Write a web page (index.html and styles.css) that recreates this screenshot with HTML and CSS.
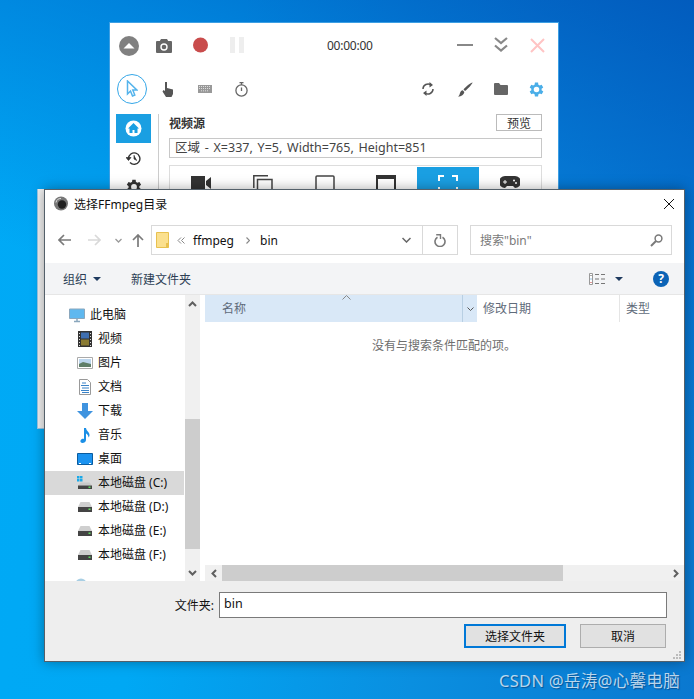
FILE: index.html
```html
<!DOCTYPE html>
<html lang="zh">
<head>
<meta charset="utf-8">
<title>选择FFmpeg目录</title>
<link rel="stylesheet" href="styles.css">
</head>
<body>
<div class="desktop">
  <div class="back-strip"></div>

  <section class="recorder">
    <div class="rec-row rec-top">
      <svg class="i-eject" width="20" height="20" viewBox="0 0 20 20"><circle cx="10" cy="10" r="10" fill="#808080"/><path d="M4.5 12.5 10 7l5.500 5.500z" fill="#fff"/></svg>
      <svg class="i-cam" width="16" height="14" viewBox="0 0 16 14"><path d="M5 0h6l1.200 2H15a1 1 0 0 1 1 1v10a1 1 0 0 1-1 1H1a1 1 0 0 1-1-1V3a1 1 0 0 1 1-1h2.800z" fill="#666"/><circle cx="8" cy="8" r="3.700" fill="#fff"/><circle cx="8" cy="8" r="2.300" fill="#666"/></svg>
      <svg class="i-rec" width="15" height="16" viewBox="0 0 15 16"><circle cx="7.500" cy="8" r="7.500" fill="#c94c4c"/></svg>
      <svg class="i-pause" width="14" height="16" viewBox="0 0 14 16"><path d="M0 0h5v16H0zM9 0h5v16H9z" fill="#eee"/></svg>
      <span class="time">00:00:00</span>
      <svg class="i-min" width="16" height="2" viewBox="0 0 16 2"><path d="M0 0h16v2H0z" fill="#888"/></svg>
      <svg class="i-dbl" width="14" height="16" viewBox="0 0 14 16"><path d="M1 1l6 5 6-5M1 8.500l6 5 6-5" fill="none" stroke="#888" stroke-width="2.200"/></svg>
      <svg class="i-x" width="15" height="15" viewBox="0 0 15 15"><path d="M1 1l13 13M14 1L1 14" stroke="#ffc4c4" stroke-width="2"/></svg>
    </div>
    <div class="rec-row rec-tools">
      <span class="cursor-ring"><svg width="12" height="18" viewBox="0 0 12 18"><path d="M1.500 1v13l3-3 2 5 2.300-1-2-5h4z" fill="#fff" stroke="#55b4ec" stroke-width="1.500"/></svg></span>
      <svg class="i-hand" width="12" height="15" viewBox="0 0 12 15"><path d="M3 0.500a1 1 0 0 1 2 0V6l6 1.500V12l-1.500 3H4L0.500 9.500 1.500 8 3 9z" fill="#555"/></svg>
      <svg class="i-kbd" width="14" height="8" viewBox="0 0 14 8"><path d="M0 0h14v8H0z" fill="#999"/><path d="M1 1.500h12M1 3.500h12M3 5.800h8" stroke="#ddd" stroke-dasharray="1 1"/></svg>
      <svg class="i-timer" width="13" height="15" viewBox="0 0 13 15"><circle cx="6.500" cy="8.500" r="5.600" fill="none" stroke="#666" stroke-width="1.300"/><path d="M4.500.7h4M6.500 1v2M6.500 5.500v3.500" stroke="#666" stroke-width="1.300" fill="none"/></svg>
      <svg class="i-sync" width="12" height="14" viewBox="0 0 12 14"><path d="M1 7a5 5 0 0 1 8-4M11 7a5 5 0 0 1-8 4" fill="none" stroke="#555" stroke-width="1.500"/><path d="M7.500 0v5.500L11 3zM4.500 14V8.500L1 11z" fill="#555"/></svg>
      <svg class="i-brush" width="15" height="15" viewBox="0 0 15 15"><path d="M14.500.5c.5.500-5 7-7.500 8.500L5.500 7.500C7 5 14 0 14.500.5z" fill="#555"/><path d="M4.800 8.300 6.300 10C6 12.500 3.500 14.500 0 14.500c1.500-1 1.500-2 2-3.500.5-1.500 1.500-2.500 2.800-2.700z" fill="#555"/></svg>
      <svg class="i-fold" width="14" height="12" viewBox="0 0 14 12"><path d="M0 1a1 1 0 0 1 1-1h4l1.500 2H13a1 1 0 0 1 1 1v8a1 1 0 0 1-1 1H1a1 1 0 0 1-1-1z" fill="#666"/></svg>
      <svg class="i-gear" width="19" height="19" viewBox="0 0 24 24"><path d="M19.400 13a7.500 7.500 0 0 0 0-2l2.100-1.600-2-3.500-2.500 1a7.500 7.500 0 0 0-1.700-1L15 3.200h-4l-.4 2.700a7.500 7.500 0 0 0-1.700 1l-2.500-1-2 3.500L6.500 11a7.500 7.500 0 0 0 0 2l-2.100 1.600 2 3.500 2.500-1a7.500 7.500 0 0 0 1.700 1l.4 2.700h4l.4-2.700a7.500 7.500 0 0 0 1.700-1l2.500 1 2-3.500zM13 15.500a3.500 3.500 0 1 1 0-7 3.500 3.500 0 0 1 0 7z" transform="translate(-1 0)" fill="#4aaee8"/></svg>
    </div>
    <div class="rec-body">
      <div class="rec-side">
        <span class="side-home"><svg width="17" height="17" viewBox="0 0 17 17"><circle cx="8.500" cy="8.500" r="8" fill="#fff"/><path d="M8.500 3 3 8.500h1.500V13h3V10h2v3h3V8.500H14z" fill="#1a9fe2"/></svg></span>
        <svg class="side-hist" width="15" height="15" viewBox="0 0 15 15"><path d="M2.500 7.500A5.700 5.700 0 1 1 4 11.500" fill="none" stroke="#333" stroke-width="1.400"/><path d="M0 6.500h5L2.500 9.500zM8 4v4l3 1.500" fill="#333" stroke="#333" stroke-width=".7"/></svg>
        <svg class="side-gear" width="20" height="20" viewBox="0 0 24 24"><path d="M19.400 13a7.500 7.500 0 0 0 0-2l2.100-1.600-2-3.500-2.500 1a7.500 7.500 0 0 0-1.700-1L15 3.200h-4l-.4 2.700a7.500 7.500 0 0 0-1.700 1l-2.500-1-2 3.500L6.500 11a7.500 7.500 0 0 0 0 2l-2.100 1.600 2 3.500 2.500-1a7.500 7.500 0 0 0 1.700 1l.4 2.700h4l.4-2.700a7.500 7.500 0 0 0 1.700-1l2.500 1 2-3.500zM13 15.500a3.500 3.500 0 1 1 0-7 3.500 3.500 0 0 1 0 7z" transform="translate(-1 0)" fill="#333"/></svg>
      </div>
      <div class="rec-main">
        <div class="src-head"><b class="src-title">视频源</b><span class="preview">预览</span></div>
        <div class="src-input">区域 - X=337, Y=5, Width=765, Height=851</div>
        <div class="tiles">
          <span class="tile"><svg width="20" height="16" viewBox="0 0 20 16"><path d="M0 1h14v14H0zM15 6l5-4v12l-5-4z" fill="#333"/></svg></span>
          <span class="tile"><svg width="20" height="18" viewBox="0 0 20 18"><path d="M.8 13V.8H15M4.500 16V4.500H19V16z" fill="none" stroke="#444" stroke-width="1.500"/></svg></span>
          <span class="tile"><svg width="20" height="18" viewBox="0 0 20 18"><rect x="1" y="1" width="18" height="15" rx="1" fill="none" stroke="#444" stroke-width="1.500"/></svg></span>
          <span class="tile"><svg width="20" height="18" viewBox="0 0 20 18"><path d="M0 0h20v4H0z" fill="#333"/><path d="M1 3v15M19 3v15" stroke="#333" stroke-width="2"/></svg></span>
          <span class="tile tile-on"><svg width="20" height="18" viewBox="0 0 20 18"><path d="M1 6V1h5M14 1h5v5M1 12v5h5M14 17h5v-5" fill="none" stroke="#fff" stroke-width="2"/></svg></span>
          <span class="tile"><svg width="20" height="14" viewBox="0 0 20 14"><path d="M5 1h10a5 5 0 0 1 0 12l-2-2H7l-2 2A5 5 0 0 1 5 1z" fill="#333"/><path d="M3 7h4M5 5v4" stroke="#fff"/><circle cx="14" cy="5.500" r="1" fill="#fff"/><circle cx="16" cy="8" r="1" fill="#fff"/></svg></span>
        </div>
      </div>
    </div>
  </section>

  <section class="dialog">
    <header class="dlg-title">
      <svg class="app-logo" width="14" height="15" viewBox="0 0 14 15"><circle cx="7" cy="7.500" r="7" fill="#777"/><circle cx="8" cy="8.500" r="4.200" fill="#222"/><path d="M2 6.500a5 5 0 0 1 5-4" stroke="#ddd" fill="none"/></svg>
      <span class="dlg-name">选择FFmpeg目录</span>
      <svg class="dlg-close" width="10" height="10" viewBox="0 0 10 10"><path d="M0 0l10 10M10 0L0 10" stroke="#111" stroke-width="1"/></svg>
    </header>

    <div class="dlg-nav">
      <svg class="n-back" width="13" height="12" viewBox="0 0 13 12"><path d="M6 1 1 6l5 5M1 6h12" fill="none" stroke="#7a7a7a" stroke-width="1.700"/></svg>
      <svg class="n-fwd" width="13" height="12" viewBox="0 0 13 12"><path d="M7 1l5 5-5 5M12 6H0" fill="none" stroke="#d9d9d9" stroke-width="1.700"/></svg>
      <svg class="n-down" width="7" height="5" viewBox="0 0 7 5"><path d="M.5 1l3 3 3-3" fill="none" stroke="#9a9a9a" stroke-width="1.300"/></svg>
      <svg class="n-up" width="12" height="13" viewBox="0 0 12 13"><path d="M1 6l5-5 5 5M6 1v12" fill="none" stroke="#7a7a7a" stroke-width="1.700"/></svg>
      <div class="addr">
        <svg class="addr-folder" width="13" height="16" viewBox="0 0 13 16"><path d="M.5.500h12v15H.5z" fill="#fbe08e" stroke="#e8c14f"/><path d="M10 11v4.500h2.500V11z" fill="#e8c14f"/></svg>
        <svg class="addr-more" width="8" height="7" viewBox="0 0 8 7"><path d="M4 .5 1 3.500l3 3M7.500.5l-3 3 3 3" fill="none" stroke="#888"/></svg>
        <span class="crumb-a">ffmpeg</span>
        <svg class="addr-sep" width="4" height="7" viewBox="0 0 4 7"><path d="M.5.500l3 3-3 3" fill="none" stroke="#888" stroke-width="1.200"/></svg>
        <span class="crumb-b">bin</span>
        <svg class="addr-drop" width="9" height="6" viewBox="0 0 9 6"><path d="M.5 1l4 4 4-4" fill="none" stroke="#666" stroke-width="1.500"/></svg>
        <span class="addr-refresh"><svg width="12" height="13" viewBox="0 0 12 13"><path d="M3.500 3.200a5 5 0 1 0 5 0" fill="none" stroke="#7a7a7a" stroke-width="1.600"/><path d="M2.200.8h4.300v4.300" fill="none" stroke="#7a7a7a" stroke-width="1.400"/></svg></span>
      </div>
      <div class="search">
        <span class="search-text">搜索"bin"</span>
        <svg width="13" height="13" viewBox="0 0 13 13"><circle cx="8.500" cy="4.500" r="3.400" fill="none" stroke="#7a7a7a" stroke-width="1.500"/><path d="M6 7 1 12" stroke="#7a7a7a" stroke-width="2"/></svg>
      </div>
    </div>

    <div class="dlg-tools">
      <span class="tool-org">组织</span>
      <svg class="caret" width="8" height="4" viewBox="0 0 8 4"><path d="M0 0h8L4 4z" fill="#1f3a5f"/></svg>
      <span class="tool-new">新建文件夹</span>
      <svg class="views" width="17" height="12" viewBox="0 0 17 12"><path d="M.5.500h3v11h-3z" fill="#fff" stroke="#999"/><path d="M6 1.500h4M12 1.500h4M6 6h4M12 6h4M6 10.500h4M12 10.500h4" stroke="#777"/><path d="M1.500 2h1v1h-1z" fill="#555"/><path d="M1.500 5.500h1v1h-1z" fill="#38c"/><path d="M1.500 9h1v1h-1z" fill="#c33"/></svg>
      <svg class="caret caret-views" width="8" height="4" viewBox="0 0 8 4"><path d="M0 0h8L4 4z" fill="#1f3a5f"/></svg>
      <span class="help">?</span>
    </div>

    <div class="dlg-main">
      <nav class="tree">
        <div class="tree-row tree-top">
          <svg width="16" height="15" viewBox="0 0 16 15"><path d="M.5 1h15v9.500H.5z" fill="#5fb8ef" stroke="#8aa7bd"/><path d="M5 13.500h6M8 11v2" stroke="#8aa7bd" stroke-width="1.500"/></svg>
          <span>此电脑</span>
        </div>
        <div class="tree-row">
          <svg width="16" height="16" viewBox="0 0 16 16"><path d="M1 0h14v16H1z" fill="#333"/><path d="M4 1.500h8v6H4z" fill="#3f6fb0"/><path d="M4 8.500h8v6H4z" fill="#8a7b33"/><path d="M2 2h1v1H2zM2 5h1v1H2zM2 8h1v1H2zM2 11h1v1H2zM2 14h1v1H2zM13 2h1v1h-1zM13 5h1v1h-1zM13 8h1v1h-1zM13 11h1v1h-1zM13 14h1v1h-1z" fill="#ddd"/></svg>
          <span>视频</span>
        </div>
        <div class="tree-row">
          <svg width="16" height="12" viewBox="0 0 16 12"><path d="M.5.500h15v11H.5z" fill="#fff" stroke="#aaa"/><path d="M2 2h12v8H2z" fill="#bcd6ee"/><path d="M2 7l4-2 8 2v3H2z" fill="#5f7e68"/></svg>
          <span>图片</span>
        </div>
        <div class="tree-row">
          <svg width="16" height="16" viewBox="0 0 16 16"><path d="M2.500.5h8l3 3v12h-11z" fill="#fff" stroke="#999"/><path d="M5 4h4M4 6.500h8M5 9h7M4 11.500h8M5 13.500h7" stroke="#3a83c8"/></svg>
          <span>文档</span>
        </div>
        <div class="tree-row">
          <svg width="16" height="16" viewBox="0 0 16 16"><path d="M5 0h6v8h5l-8 8-8-8h5z" fill="#3f93df"/></svg>
          <span>下载</span>
        </div>
        <div class="tree-row">
          <svg width="16" height="16" viewBox="0 0 16 16"><path d="M7 1h2c.3 3 3.500 4 3.500 7 0 1-.4 2-1 2.500.2-2-1.500-3.500-2.500-4V13c0 2-2 3-3.500 3S3 15 3.500 13.500 6 11.500 7 12z" fill="#1b8fe6"/></svg>
          <span>音乐</span>
        </div>
        <div class="tree-row">
          <svg width="16" height="12" viewBox="0 0 16 12"><path d="M.5.500h15v11H.5z" fill="#1b93f0" stroke="#0b5c9e"/><path d="M2 10.500h2M12 10.500h2" stroke="#fff"/></svg>
          <span>桌面</span>
        </div>
        <div class="tree-row tree-sel">
          <svg width="16" height="14" viewBox="0 0 16 14"><path d="M0 0h2.500v2.500H0zM3 0h2.500v2.500H3zM0 3h2.500v2.500H0zM3 3h2.500v2.500H3z" fill="#1ba9e8"/><path d="M3.500 6.500h9l2.500 3H1z" fill="#c9c9c9"/><path d="M1 9.500h14V13H1z" fill="#444"/><path d="M11.500 10.500h2v1.500h-2z" fill="#5fdc5f"/></svg>
          <span>本地磁盘 (C:)</span>
        </div>
        <div class="tree-row">
          <svg width="16" height="12" viewBox="0 0 16 12"><path d="M3.500 1h9l2.500 5H1z" fill="#cfcfcf"/><path d="M1 6h14v5H1z" fill="#444"/><path d="M11.500 7.500h2V9h-2z" fill="#5fdc5f"/></svg>
          <span>本地磁盘 (D:)</span>
        </div>
        <div class="tree-row">
          <svg width="16" height="12" viewBox="0 0 16 12"><path d="M3.500 1h9l2.500 5H1z" fill="#cfcfcf"/><path d="M1 6h14v5H1z" fill="#444"/><path d="M11.500 7.500h2V9h-2z" fill="#5fdc5f"/></svg>
          <span>本地磁盘 (E:)</span>
        </div>
        <div class="tree-row">
          <svg width="16" height="12" viewBox="0 0 16 12"><path d="M3.500 1h9l2.500 5H1z" fill="#cfcfcf"/><path d="M1 6h14v5H1z" fill="#444"/><path d="M11.500 7.500h2V9h-2z" fill="#5fdc5f"/></svg>
          <span>本地磁盘 (F:)</span>
        </div>
        <div class="tree-row tree-peek">
          <svg width="12" height="12" viewBox="0 0 12 12"><circle cx="6" cy="6" r="5.500" fill="#a9cfe4"/></svg>
        </div>
      </nav>
      <div class="vscroll">
        <span class="sb-btn"><svg width="9" height="6" viewBox="0 0 9 6"><path d="M1 5l3.500-3.500L8 5" fill="none" stroke="#5f5f5f" stroke-width="2"/></svg></span>
        <span class="vs-gap-a"></span>
        <span class="vs-thumb"></span>
        <span class="vs-gap-b"></span>
        <span class="sb-btn"><svg width="9" height="6" viewBox="0 0 9 6"><path d="M1 1l3.500 3.500L8 1" fill="none" stroke="#5f5f5f" stroke-width="2"/></svg></span>
      </div>
      <div class="files">
        <div class="cols">
          <div class="col-name">
            <span class="col-text">名称</span>
            <svg class="sort" width="9" height="5" viewBox="0 0 9 5"><path d="M.5 4.500l4-4 4 4" fill="none" stroke="#888"/></svg>
            <span class="col-drop"><svg width="7" height="4" viewBox="0 0 7 4"><path d="M.5.500l3 3 3-3" fill="none" stroke="#555"/></svg></span>
          </div>
          <div class="col-date"><span class="col-text">修改日期</span></div>
          <div class="col-type"><span class="col-text">类型</span></div>
        </div>
        <div class="empty">没有与搜索条件匹配的项。</div>
        <div class="hscroll">
          <span class="sb-btn hs-btn"><svg width="6" height="9" viewBox="0 0 6 9"><path d="M5 1 1.500 4.500 5 8" fill="none" stroke="#5f5f5f" stroke-width="2"/></svg></span>
          <span class="hs-thumb"></span>
          <span class="hs-gap"></span>
          <span class="sb-btn hs-btn"><svg width="6" height="9" viewBox="0 0 6 9"><path d="M1 1l3.500 3.500L1 8" fill="none" stroke="#5f5f5f" stroke-width="2"/></svg></span>
        </div>
      </div>
    </div>

    <footer class="dlg-foot">
      <div class="foot-row">
        <label class="foot-label">文件夹:</label>
        <div class="foot-input">bin</div>
      </div>
      <div class="foot-btns">
        <span class="btn btn-primary">选择文件夹</span>
        <span class="btn">取消</span>
      </div>
      <svg class="grip" width="9" height="9" viewBox="0 0 9 9"><path d="M6 0h2v2H6zM3 3h2v2H3zM6 3h2v2H6zM0 6h2v2H0zM3 6h2v2H3zM6 6h2v2H6z" fill="#bbb"/></svg>
    </footer>
  </section>

  <div class="watermark">CSDN @岳涛@心馨电脑</div>
</div>
</body>
</html>
```

FILE: styles.css
```css
* { box-sizing: border-box; }
html, body { margin: 0; padding: 0; }
body {
  font-family: "Noto Sans", "Noto Sans CJK SC", sans-serif;
  font-size: 12px;
  color: #111;
}
svg { display: block; flex: none; }

.desktop {
  position: relative;
  width: 694px;
  height: 699px;
  overflow: hidden;
  background:
    linear-gradient(200deg, rgba(0, 85, 185, .85) 0%, rgba(0, 100, 200, .55) 22%, rgba(0, 110, 205, 0) 52%),
    linear-gradient(100deg, #00aaf6 0%, #00a8f4 30%, #0a8fe0 65%, #0a78d0 100%);
}

/* windows on the desktop */
.back-strip {
  position: absolute;
  left: 37px;
  top: 189px;
  width: 8px;
  height: 240px;
  background: #f0f0f0;
  border-left: 1px solid #9cc6e4;
  border-bottom: 1px solid #9cc6e4;
}
.recorder {
  position: absolute;
  left: 109px;
  top: 22px;
  width: 450px;
  height: 178px;
  background: #fff;
  border: 1px solid #3d9fe3;
  color: #333;
}
.dialog {
  position: absolute;
  left: 44px;
  top: 189px;
  width: 641px;
  height: 473px;
  display: flex;
  flex-direction: column;
  background: #fff;
  border: 1px solid #54606a;
  box-shadow: 0 0 12px rgba(0, 0, 0, .35);
}
.watermark {
  position: absolute;
  left: 499px;
  top: 670px;
  font-size: 16.500px;
  letter-spacing: .3px;
  line-height: 22px;
  color: rgba(255, 255, 255, .72);
  text-shadow: 1px 1px 1px rgba(0, 40, 90, .5);
  white-space: nowrap;
}

/* recorder */
.rec-row { display: flex; align-items: center; }
.rec-top { height: 44px; padding-left: 9px; margin-top: 1px; }
.i-cam { margin-left: 17px; margin-bottom: 1px; }
.i-rec { margin-left: 21px; margin-bottom: 2px; }
.i-pause { margin-left: 22px; margin-bottom: 2px; }
.time { margin-left: 83px; width: 50px; padding-bottom: 2px; font-size: 12px; letter-spacing: -.25px; color: #333; white-space: nowrap; }
.i-min { margin-left: 80px; margin-bottom: 2px; }
.i-dbl { margin-left: 21px; margin-bottom: 2px; }
.i-x { margin-left: 22px; margin-bottom: 2px; }

.rec-tools { height: 30px; padding-left: 7px; margin-top: 6px; }
.cursor-ring {
  width: 30px; height: 30px; border: 1px solid #35a7e8; border-radius: 50%;
  display: flex; align-items: center; justify-content: center;
}
.i-hand { margin-left: 15px; }
.i-kbd { margin-left: 24px; }
.i-timer { margin-left: 23px; }
.i-sync { margin-left: 174px; }
.i-brush { margin-left: 24px; }
.i-fold { margin-left: 21px; }
.i-gear { margin-left: 19px; }

.rec-body { display: flex; margin-top: 10px; padding-left: 6px; }
.rec-side {
  width: 43px; height: 90px; padding-right: 7px;
  border-right: 1px solid #ccc;
  display: flex; flex-direction: column; align-items: center;
}
.side-home {
  width: 35px; height: 29px; background: #1a9fe2; flex: none;
  display: flex; align-items: center; justify-content: center;
}
.side-hist { margin-top: 8px; }
.side-gear { margin-top: 11px; }
.rec-main { width: 373px; margin-left: 10px; }
.src-head { display: flex; justify-content: space-between; height: 17px; align-items: center; }
.src-title { font-weight: 700; font-size: 12px; color: #333; }
.preview {
  width: 46px; height: 17px; border: 1px solid #bbb;
  display: flex; align-items: center; justify-content: center; color: #333;
}
.src-input {
  margin-top: 7px; height: 20px; border: 1px solid #c8c8c8; padding-left: 5px;
  line-height: 18px; font-size: 12.500px; word-spacing: 1.500px; color: #444; white-space: nowrap;
}
.tiles {
  margin-top: 7px; height: 40px; border: 1px solid #ddd; padding: 1px 0 0 0;
  display: flex;
}
.tile { width: 62px; height: 40px; padding-top: 8px; display: flex; justify-content: center; align-items: flex-start; }
.tile-on { background: #1a9fe2; }

/* dialog */
.dlg-title { height: 27px; display: flex; align-items: center; padding-left: 9px; flex: none; }
.dlg-name { margin-left: 6px; font-size: 12px; color: #111; white-space: nowrap; }
.dlg-close { margin-left: auto; margin-right: 10px; }

.dlg-nav { height: 46px; flex: none; display: flex; align-items: center; padding-left: 13px; }
.n-fwd { margin-left: 17px; }
.n-down { margin-left: 14px; }
.n-up { margin-left: 10px; }
.addr {
  margin-left: 7px; width: 307px; height: 30px; border: 1px solid #d9d9d9;
  display: flex; align-items: center; padding-left: 4px;
}
.addr-more { margin-left: 8px; }
.crumb-a { margin-left: 8px; }
.addr-sep { margin-left: 12px; }
.crumb-b { margin-left: 10px; }
.addr-drop { margin-left: auto; margin-right: 11px; }
.addr-refresh {
  width: 35px; height: 28px; border-left: 1px solid #d9d9d9;
  display: flex; align-items: center; justify-content: center;
}
.search {
  margin-left: 12px; width: 202px; height: 30px; border: 1px solid #d9d9d9;
  display: flex; align-items: center; justify-content: space-between;
  padding: 0 8px 0 9px; color: #7a7a7a;
}

.dlg-tools {
  height: 32px; flex: none; background: #f3f4f6; border-bottom: 1px solid #e6e6e6;
  display: flex; align-items: center; padding-left: 18px; color: #2c3e55;
}
.tool-org { width: 24px; white-space: nowrap; }
.caret { margin-left: 6px; }
.tool-new { margin-left: 30px; white-space: nowrap; }
.views { margin-left: auto; }
.caret-views { margin-left: 9px; margin-right: 30px; }
.help {
  width: 16px; height: 16px; border-radius: 50%; margin-right: 15px;
  background: #0b63b6; color: #fff; font-weight: 700; font-size: 12px; line-height: 16px;
  text-align: center; flex: none;
}

.dlg-main { flex: 1; min-height: 0; display: flex; background: #fff; }
.tree { width: 140px; flex: none; padding-top: 8px; overflow: hidden; }
.tree-row {
  height: 24px; display: flex; align-items: center; gap: 5px; padding-left: 32px;
  white-space: nowrap; color: #111;
}
.tree-row span { padding-bottom: 2px; }
.tree-top { padding-left: 24px; }
.tree-sel { background: #d9d9d9; width: 139px; }
.tree-peek { padding-left: 30px; align-items: flex-start; }
.tree-peek svg { margin-top: 11px; }

.vscroll { width: 15px; flex: none; background: #f0f0f0; display: flex; flex-direction: column; }
.sb-btn { height: 17px; flex: none; display: flex; align-items: center; justify-content: center; }
.vs-gap-a { height: 107px; flex: none; }
.vs-thumb { height: 130px; flex: none; background: #cdcdcd; }
.vs-gap-b { flex: 1; }

.files { margin-left: 5px; flex: 1; min-width: 0; display: flex; flex-direction: column; }
.cols { height: 27px; flex: none; display: flex; color: #5f6b7a; }
.col-text { padding-bottom: 2px; }
.col-name {
  position: relative;
  width: 272px; background: #d9e8f7; padding-left: 17px; display: flex; align-items: center;
}
.sort { position: absolute; left: 137px; top: 0; }
.col-drop {
  margin-left: auto; width: 15px; height: 100%; border-left: 1px solid #b8cfe3;
  display: flex; align-items: center; justify-content: center;
}
.col-date { width: 143px; padding-left: 6px; display: flex; align-items: center; border-right: 1px solid #e5e5e5; }
.col-type { padding-left: 6px; display: flex; align-items: center; }
.empty { flex: 1; padding: 14px 0 0 167px; color: #6d6d6d; }
.hscroll { height: 16px; flex: none; background: #f0f0f0; display: flex; }
.hs-btn { width: 17px; height: 16px; }
.hs-thumb { width: 341px; background: #cdcdcd; }
.hs-gap { flex: 1; }

.dlg-foot {
  position: relative;
  height: 80px; flex: none; background: #eee; padding: 11px 17px 0 0;
}
.foot-row { display: flex; justify-content: flex-end; align-items: center; }
.foot-label { margin-right: 5px; white-space: nowrap; }
.foot-input {
  width: 448px; height: 26px; background: #fff; border: 1px solid #7a7a7a;
  padding-left: 4px; font-size: 12.500px; line-height: 22px;
}
.foot-btns { display: flex; justify-content: flex-end; gap: 14px; margin-top: 6px; padding-right: 1px; }
.btn {
  width: 86px; height: 24px; background: #e1e1e1; border: 1px solid #adadad;
  display: flex; align-items: center; justify-content: center; padding-bottom: 1px;
}
.btn-primary { width: 102px; border: 2px solid #0078d7; }
.grip { position: absolute; right: 2px; bottom: 1px; }
```
